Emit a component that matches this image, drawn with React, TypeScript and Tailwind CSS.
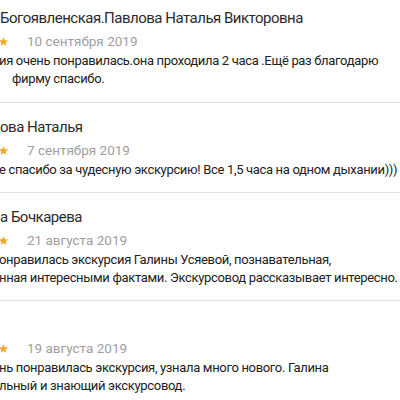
import React from "react";

function Star() {
  return (
    <svg width="11" height="11" viewBox="0 0 24 24" className="shrink-0">
      <path
        d="M12 2.5l2.9 6.6 7.1.6-5.4 4.7 1.6 7-6.2-3.7-6.2 3.7 1.6-7L2 9.7l7.1-.6z"
        fill="#f5a623"
      />
    </svg>
  );
}

type Review = {
  name: string;
  date: string;
  lines: { text: string; indent?: string }[];
  first?: boolean;
};

const reviews: Review[] = [
  {
    name: "Богоявленская.Павлова Наталья Викторовна",
    date: "10 сентября 2019",
    lines: [
      { text: "ия очень понравилась.она проходила 2 часа .Ещё раз благодарю", indent: "-ml-[1px]" },
      { text: "фирму спасибо.", indent: "ml-[12px]" },
    ],
    first: true,
  },
  {
    name: "ова Наталья",
    date: "7 сентября 2019",
    lines: [
      { text: "е спасибо за чудесную экскурсию! Все 1,5 часа на одном дыхании)))", indent: "-ml-[1px]" },
    ],
  },
  {
    name: "а Бочкарева",
    date: "21 августа 2019",
    lines: [
      { text: "онравилась экскурсия Галины Усяевой, познавательная,", indent: "-ml-[1px]" },
      { text: "нная интересными фактами. Экскурсовод рассказывает интересно.", indent: "-ml-[1px]" },
    ],
  },
  {
    name: "",
    date: "19 августа 2019",
    lines: [
      { text: "нь понравилась экскурсия, узнала много нового. Галина", indent: "-ml-[1px]" },
      { text: "льный и знающий экскурсовод.", indent: "-ml-[1px]" },
    ],
  },
];

export default function App() {
  return (
    <div
      className="w-[400px] h-[400px] overflow-hidden bg-white"
      style={{ fontFamily: "Roboto, 'Noto Sans', sans-serif" }}
    >
      {reviews.map((r, i) => (
        <div
          key={i}
          className={
            (r.first ? "pt-[8px] pb-[14px] " : "pt-[14px] pb-[13px] ") +
            "border-b border-[#e3e3e3]"
          }
        >
          <div className="h-[20px] text-[15px] tracking-[-0.5px] leading-[20px] text-[#2b2b2b] whitespace-nowrap">
            {r.name || "\u00a0"}
          </div>
          <div className="mt-[3px] h-[20px] flex items-center whitespace-nowrap">
            <div className="flex gap-[2px] -ml-[54px] items-center">
              <Star />
              <Star />
              <Star />
              <Star />
              <Star />
            </div>
            <span className="ml-[18px] text-[13.5px] leading-[20px] text-[#9e9e9e]">
              {r.date}
            </span>
          </div>
          <div className="mt-[1px] text-[13px] tracking-[-0.33px] leading-[18px] text-[#212121]">
            {r.lines.map((l, j) => (
              <div key={j} className={"whitespace-nowrap " + (l.indent || "")}>
                {l.text}
              </div>
            ))}
          </div>
        </div>
      ))}
    </div>
  );
}
